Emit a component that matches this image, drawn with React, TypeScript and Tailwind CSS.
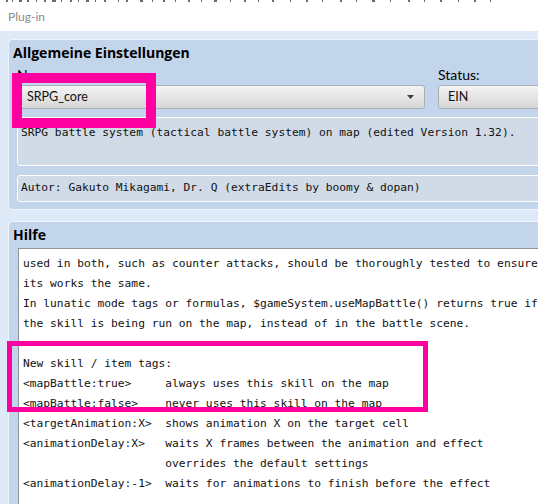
import React from "react";

const mono = { fontFamily: '"DejaVu Sans Mono", monospace' };
const ui = { fontFamily: 'Lato, "Noto Sans", sans-serif' };
const bold = { fontFamily: '"Open Sans", "Noto Sans", sans-serif' };

const helpLines = [
  "used in both, such as counter attacks, should be thoroughly tested to ensure",
  "its works the same.",
  "In lunatic mode tags or formulas, $gameSystem.useMapBattle() returns true if",
  "the skill is being run on the map, instead of in the battle scene.",
  "",
  "New skill / item tags:",
  "<mapBattle:true>     always uses this skill on the map",
  "<mapBattle:false>    never uses this skill on the map",
  "<targetAnimation:X>  shows animation X on the target cell",
  "<animationDelay:X>   waits X frames between the animation and effect",
  "                     overrides the default settings",
  "<animationDelay:-1>  waits for animations to finish before the effect",
];

// glyph bottoms of the window behind, peeking over the top edge
const peeks: [number, number][] = [
  [6, 2], [12, 1], [19, 3], [27, 2], [36, 1], [44, 2], [52, 4], [61, 1], [70, 2], [78, 1],
  [86, 3], [95, 1], [104, 2], [118, 1], [126, 2], [140, 3], [152, 1], [163, 2], [175, 1],
  [188, 2], [201, 1], [214, 3], [230, 1], [244, 2], [258, 1], [272, 2], [290, 1], [306, 2],
  [322, 1], [340, 2], [356, 1], [372, 3], [390, 1], [408, 2], [424, 1], [440, 2], [458, 1],
  [474, 2], [490, 1],
];

function Combo({ value, arrow, className }: { value: string; arrow?: boolean; className?: string }) {
  return (
    <div
      className={`h-[24px] flex items-center rounded-[3px] border border-[#a9b0b8] bg-gradient-to-b from-[#f4f4f4] to-[#d6d6d6] text-[12.5px] text-[#111] pl-[9px] pr-[8px] ${className ?? ""}`}
      style={ui}
    >
      <span className="flex-1">{value}</span>
      {arrow && (
        <svg width="8" height="4" viewBox="0 0 8 4" className="mr-[1px]">
          <path d="M0 0 H7 L3.5 4 Z" fill="#404040" />
        </svg>
      )}
    </div>
  );
}

export default function App() {
  return (
    <div className="relative w-[538px] h-[504px] overflow-hidden bg-[#dfeaf8]">
      <div className="h-[3px] flex bg-white">
        {peeks.map(([x, w], i) => (
          <div key={i} className="h-[2px] bg-[#6b6b6b]" style={{ marginLeft: i === 0 ? x : x - peeks[i - 1][0] - peeks[i - 1][1], width: w }} />
        ))}
      </div>

      {/* title bar */}
      <div className="h-[28px] bg-white flex items-center pl-[8px] text-[12px] text-[#8a8a8a]" style={ui}>
        Plug-in
      </div>

      <div className="pt-[8px] pl-[8px]">
        {/* general settings */}
        <div className="h-[171px] mr-[-12px] rounded-l-[5px] border border-[#eef4fb] bg-[#c3d5ea] px-[8px] pt-[5px]">
          <div className="-ml-[4px] h-[16px] leading-[16px] text-[14px] font-bold text-black" style={bold}>
            Allgemeine Einstellungen
          </div>
          <div className="mt-[6px] flex gap-[13px] mr-[-30px]">
            <div className="w-[408px]">
              <div className="h-[16px] leading-[16px] text-[14px] text-black" style={ui}>Name:</div>
              <Combo value="SRPG_core" arrow className="mt-[2px]" />
            </div>
            <div className="flex-1">
              <div className="h-[16px] leading-[16px] text-[14px] text-black" style={ui}>Status:</div>
              <Combo value="EIN" className="mt-[2px]" />
            </div>
          </div>
          <div
            className="mt-[8px] h-[49px] rounded-[3px] border border-white bg-[#d0dbe7] pl-[3px] pt-[5px] text-[11.25px] leading-[20px] text-[#111] whitespace-pre"
            style={mono}
          >
            SRPG battle system (tactical battle system) on map (edited Version 1.32).
          </div>
          <div
            className="mt-[9px] h-[27px] flex items-center rounded-[3px] border border-white bg-[#d0dbe7] pl-[3px] text-[11.25px] text-[#111] whitespace-pre"
            style={mono}
          >
            Autor: Gakuto Mikagami, Dr. Q (extraEdits by boomy &amp; dopan)
          </div>
        </div>

        {/* help */}
        <div className="mt-[11px] h-[300px] mr-[-12px] rounded-tl-[5px] border border-[#eef4fb] bg-[#c3d5ea] pl-[9px] pt-[5px]">
          <div className="-ml-[5px] h-[16px] leading-[16px] text-[14px] font-bold text-black" style={bold}>
            Hilfe
          </div>
          <div
            className="mt-[5px] h-[300px] border border-[#8c949c] bg-white pl-[4px] pt-[5px] text-[11.25px] leading-[20px] text-[#111] whitespace-pre"
            style={mono}
          >
            {helpLines.map((l, i) => (
              <div key={i} className="h-[20px]">{l}</div>
            ))}
          </div>
        </div>
      </div>

      {/* highlight frames */}
      <div className="absolute left-[12px] top-[73px] w-[144px] h-[55px] border-[10px] border-[#ff00a0]" />
      <div className="absolute left-[7px] top-[341px] w-[421px] h-[71px] border-[5px] border-[#ff00a0]" />
    </div>
  );
}
